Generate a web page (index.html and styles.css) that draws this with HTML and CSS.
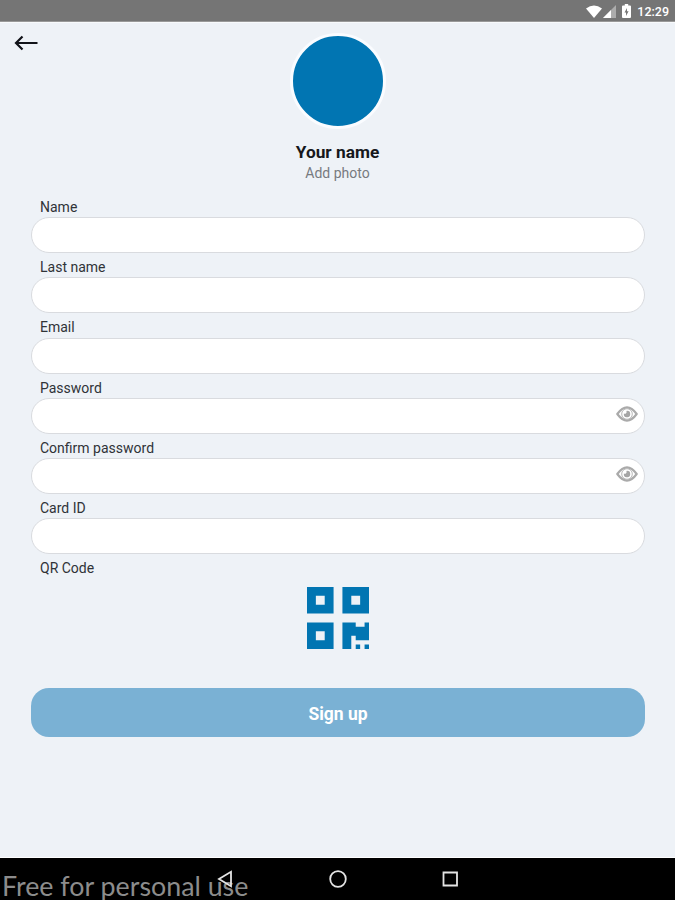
FILE: index.html
```html
<!DOCTYPE html>
<html lang="en">
<head>
<meta charset="utf-8">
<meta name="viewport" content="width=device-width, initial-scale=1.0">
<title>Sign up</title>

<link rel="stylesheet" href="styles.css">
</head>

<body>

  <div class="status-bar">
    <svg class="wifi" viewBox="0 0 16 13"><path d="M0 3.4Q8-2.6 16 3.4L8 13z"/></svg>
    <svg class="signal" viewBox="0 0 13 13"><path class="dim" d="M0 13L13 0v13z"/><path d="M0 13L8 5v8z"/></svg>
    <svg class="battery" viewBox="0 0 9 14"><path fill-rule="evenodd" d="M2.8 0h3.4v1.5H8q1 0 1 1V13q0 1-1 1H1q-1 0-1-1V2.500q0-1 1-1h1.800zM5 4L2.500 8.500H4V12l2.600-4.700H5z"/></svg>
    <span class="clock">12:29</span>
  </div>

  <main class="screen">
    <header class="profile">
      <a href="#" class="back" aria-label="Back">
        <svg viewBox="0 0 24 16"><path d="M23.500 8H2M8.500 1.500L2 8l6.500 6.500"/></svg>
      </a>
      <div class="person">
        <div class="avatar"></div>
        <h1 class="name">Your name</h1>
        <div class="add-photo">Add photo</div>
      </div>
    </header>

    <form class="signup-form">
      <label class="label" for="name">Name</label>
      <div class="field"><input id="name" type="text"></div>

      <label class="label" for="lastname">Last name</label>
      <div class="field"><input id="lastname" type="text"></div>

      <label class="label" for="email">Email</label>
      <div class="field"><input id="email" type="email"></div>

      <label class="label" for="password">Password</label>
      <div class="field">
        <input id="password" type="password">
        <svg class="eye" viewBox="0 0 22 16"><path class="lid" d="M1.300 8Q11-5.200 20.700 8 11 21.200 1.300 8z"/><circle class="iris" cx="11" cy="8" r="5.300"/><path class="pupil" d="M11 4.800a3.200 3.200 0 1 1-3.100 2.600 1.800 1.800 0 0 0 2.500-2.400z"/></svg>
      </div>

      <label class="label" for="confirm">Confirm password</label>
      <div class="field">
        <input id="confirm" type="password">
        <svg class="eye" viewBox="0 0 22 16"><path class="lid" d="M1.300 8Q11-5.200 20.700 8 11 21.200 1.300 8z"/><circle class="iris" cx="11" cy="8" r="5.300"/><path class="pupil" d="M11 4.800a3.200 3.200 0 1 1-3.100 2.600 1.800 1.800 0 0 0 2.500-2.400z"/></svg>
      </div>

      <label class="label" for="card">Card ID</label>
      <div class="field"><input id="card" type="text"></div>

      <div class="label">QR Code</div>
      <svg class="qr" viewBox="0 32 448 448"><path d="M0 224h192V32H0v192zM64 96h64v64H64V96zm192-64v192h192V32H256zm128 128h-64V96h64v64zM0 480h192V288H0v192zm64-128h64v64H64v-64zm352-64h32v128h-96v-32h-32v96h-64V288h96v32h64v-32zm0 160h32v32h-32v-32zm-64 0h32v32h-32v-32z"/></svg>

      <button type="submit" class="submit">Sign up</button>
    </form>
  </main>

  <nav class="nav-bar">
    <div class="watermark">Free for personal use</div>
    <svg viewBox="0 0 20 20"><path d="M15 2.800v14.400L3 10z"/></svg>
    <svg viewBox="0 0 20 20"><circle cx="10" cy="10" r="7.800"/></svg>
    <svg viewBox="0 0 20 20"><path d="M3.500 3.500h13.500v13H3.500z"/></svg>
  </nav>

</body>
</html>
```

FILE: styles.css
```css
html, body {
  height: 100%;
  margin: 0;
  padding: 0;
  overflow: hidden;
}

body {
  display: flex;
  flex-direction: column;
  font-family: Roboto, sans-serif;
  background: #eef2f7;
}

.status-bar {
  display: flex;
  flex: none;
  align-items: center;
  justify-content: flex-end;
  box-sizing: border-box;
  height: 22px;
  padding-top: 1px;
  padding-right: 6px;
  background: #757575;
  border-bottom: 1px solid #999;
  color: #fff;
}

.status-bar svg {
  fill: #fff;
}

.wifi {
  width: 16px;
  height: 13px;
  margin-right: 1px;
}

.signal {
  width: 13px;
  height: 13px;
  margin-right: 6px;
}

.signal .dim {
  opacity: 0.4;
}

.battery {
  width: 9px;
  height: 14px;
  margin-right: 6px;
}

.clock {
  font-size: 12.5px;
  font-weight: 500;
}

.screen {
  flex: 1;
  border-top: 1px solid #f8fafc;
}

.profile {
  display: grid;
  grid-template-columns: 1fr auto 1fr;
  padding: 10px 15px 0 15px;
}

.back svg {
  display: block;
  width: 24px;
  height: 16px;
  margin-top: 2px;
  margin-left: -1px;
  fill: none;
  stroke: #111319;
  stroke-width: 2.2;
}

.person {
  display: flex;
  flex-direction: column;
  align-items: center;
}

.avatar {
  width: 90px;
  height: 90px;
  border: 3px solid #fafcff;
  border-radius: 50%;
  background: #0175b2;
}

.name {
  margin: 13px 0 0;
  font-size: 17.3px;
  line-height: 20px;
  font-weight: 700;
  color: #16181c;
}

.add-photo {
  margin-top: 2px;
  font-size: 14px;
  line-height: 18px;
  color: #777a7f;
}

.signup-form {
  display: flex;
  flex-direction: column;
  padding: 17px 30px 0 31px;
}

.label {
  height: 18.2px;
  padding-left: 9px;
  font-size: 14px;
  line-height: 16px;
  color: #303338;
}

.field {
  display: flex;
  align-items: center;
  box-sizing: border-box;
  height: 36px;
  margin-bottom: 6px;
  padding: 0 6px 0 16px;
  border: 1px solid #d9dbdf;
  border-radius: 18px;
  background: #fff;
}

.field input {
  flex: 1;
  min-width: 0;
  border: none;
  outline: none;
  background: none;
  font-size: 14px;
}

.eye {
  width: 22px;
  height: 16px;
  margin-bottom: 3px;
}

.eye .lid {
  fill: #fff;
  stroke: #aaa;
  stroke-width: 2.2;
  stroke-linejoin: round;
}

.eye .iris {
  fill: none;
  stroke: #b8b8b8;
  stroke-width: 1;
}

.eye .pupil {
  fill: #a6a6a6;
}

.qr {
  align-self: center;
  width: 62px;
  height: 62px;
  margin-top: 9px;
  fill: #0175b2;
}

.submit {
  height: 49px;
  margin-top: 39px;
  padding-top: 3px;
  border: none;
  border-radius: 18px;
  background: #7ab1d4;
  color: #fff;
  font-family: inherit;
  font-size: 17.5px;
  font-weight: 700;
  cursor: pointer;
}

.nav-bar {
  position: relative;
  display: flex;
  flex: none;
  align-items: center;
  justify-content: center;
  gap: 92px;
  height: 42px;
  border-top: 1px solid #fff;
  background: #000;
}

.nav-bar svg {
  position: relative;
  width: 20px;
  height: 20px;
  fill: none;
  stroke: #e4e4e4;
  stroke-width: 1.8;
}

.watermark {
  position: absolute;
  left: 2px;
  bottom: 0;
  font-family: Lato, sans-serif;
  font-size: 26.8px;
  line-height: 27px;
  color: #8c8c8c;
}
```
